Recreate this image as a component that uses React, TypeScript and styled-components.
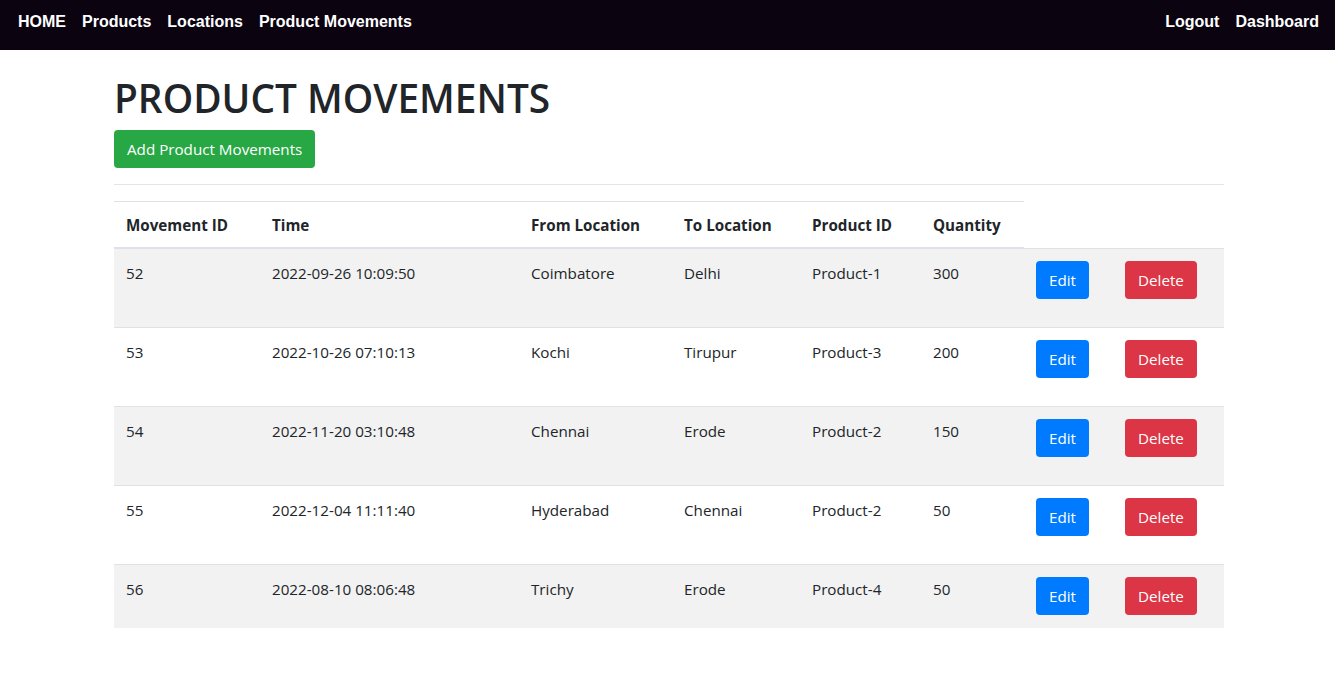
import React from "react";
import styled, { createGlobalStyle } from "styled-components";

const Global = createGlobalStyle`
  * { box-sizing: border-box; }
  body {
    margin: 0;
    font-family: "Open Sans", "Noto Sans", sans-serif;
    font-size: 15.2px;
    line-height: 24px;
    color: #212529;
    background: #fff;
  }
`;

const NavBar = styled.nav`
  height: 50px;
  background: #0b0310;
  display: flex;
  justify-content: space-between;
  align-items: flex-start;
  padding: 10px 16px 0 18px;
`;

const NavGroup = styled.div`
  display: flex;
  gap: 16px;
`;

const NavLink = styled.a`
  font-family: "Liberation Sans", Arial, sans-serif;
  font-weight: bold;
  font-size: 16px;
  line-height: 24px;
  color: #fff;
  text-decoration: none;
`;

const Container = styled.main`
  width: 1110px;
  margin: 24px 0 0 114px;
`;

const Title = styled.h1`
  margin: 0 0 8px;
  font-size: 38.8px;
  font-weight: 600;
  line-height: 48px;
`;

const Btn = styled.button<{ $variant: "success" | "primary" | "danger" }>`
  font-family: inherit;
  font-size: 15.2px;
  line-height: 24px;
  padding: 6px 12px;
  border: 1px solid transparent;
  border-radius: 4px;
  color: #fff;
  cursor: pointer;
  background: ${(p) =>
    p.$variant === "success" ? "#28a745" : p.$variant === "primary" ? "#007bff" : "#dc3545"};
`;

const Rule = styled.hr`
  margin: 16px 0;
  border: 0;
  border-top: 1px solid rgba(0, 0, 0, 0.1);
`;

const Table = styled.table`
  width: 1110px;
  border-collapse: collapse;
  table-layout: fixed;
`;

const Th = styled.th`
  text-align: left;
  font-weight: bold;
  padding: 11px 12px 10px;
  border-top: 1px solid #dee2e6;
  border-bottom: 2px solid #dee2e6;
  vertical-align: bottom;
`;

const Row = styled.tr<{ $striped: boolean }>`
  background: ${(p) => (p.$striped ? "#f2f2f2" : "transparent")};
`;

const Td = styled.td`
  padding: 12px;
  border-top: 1px solid #dee2e6;
  vertical-align: top;
`;

const ActionForm = styled.form<{ $last: boolean }>`
  margin: 0 0 ${(p) => (p.$last ? "1px" : "16px")};
`;

const rows = [
  ["52", "2022-09-26 10:09:50", "Coimbatore", "Delhi", "Product-1", "300"],
  ["53", "2022-10-26 07:10:13", "Kochi", "Tirupur", "Product-3", "200"],
  ["54", "2022-11-20 03:10:48", "Chennai", "Erode", "Product-2", "150"],
  ["55", "2022-12-04 11:11:40", "Hyderabad", "Chennai", "Product-2", "50"],
  ["56", "2022-08-10 08:06:48", "Trichy", "Erode", "Product-4", "50"],
];

const widths = [146, 259, 153, 128, 121, 103, 89, 111];
const headers = ["Movement ID", "Time", "From Location", "To Location", "Product ID", "Quantity"];

export default function App() {
  return (
    <>
      <Global />
      <NavBar>
        <NavGroup>
          <NavLink href="#">HOME</NavLink>
          <NavLink href="#">Products</NavLink>
          <NavLink href="#">Locations</NavLink>
          <NavLink href="#">Product Movements</NavLink>
        </NavGroup>
        <NavGroup>
          <NavLink href="#">Logout</NavLink>
          <NavLink href="#">Dashboard</NavLink>
        </NavGroup>
      </NavBar>
      <Container>
        <Title>PRODUCT MOVEMENTS</Title>
        <Btn $variant="success">Add Product Movements</Btn>
        <Rule />
        <Table>
          <colgroup>
            {widths.map((w, i) => (
              <col key={i} style={{ width: w }} />
            ))}
          </colgroup>
          <thead>
            <tr>
              {headers.map((h) => (
                <Th key={h}>{h}</Th>
              ))}
            </tr>
          </thead>
          <tbody>
            {rows.map((r, i) => {
              const last = i === rows.length - 1;
              return (
                <Row key={r[0]} $striped={i % 2 === 0}>
                  {r.map((c, j) => (
                    <Td key={j}>{c}</Td>
                  ))}
                  <Td>
                    <ActionForm $last={last} onSubmit={(e) => e.preventDefault()}>
                      <Btn $variant="primary">Edit</Btn>
                    </ActionForm>
                  </Td>
                  <Td>
                    <ActionForm $last={last} onSubmit={(e) => e.preventDefault()}>
                      <Btn $variant="danger">Delete</Btn>
                    </ActionForm>
                  </Td>
                </Row>
              );
            })}
          </tbody>
        </Table>
      </Container>
    </>
  );
}
